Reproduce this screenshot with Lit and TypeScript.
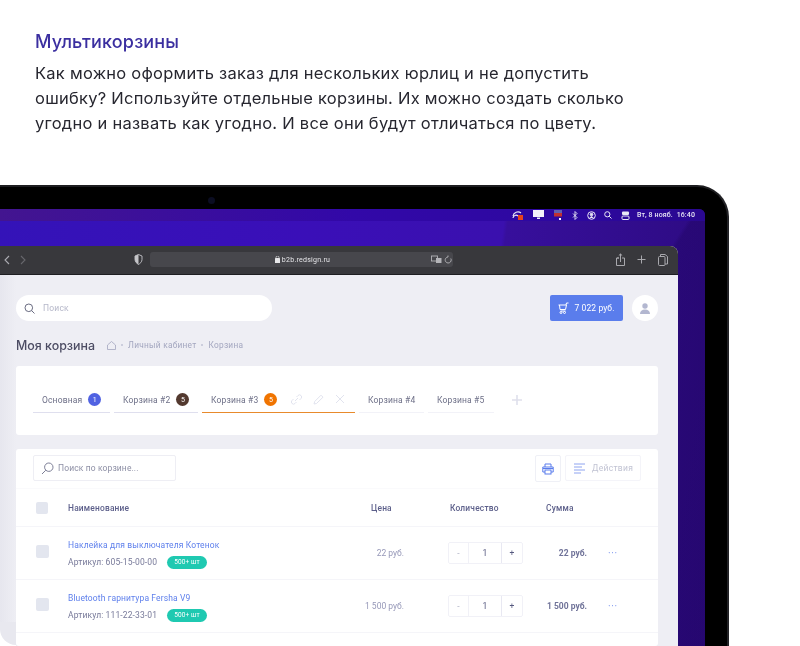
import { LitElement, html, css, svg } from "lit";
import { customElement } from "lit/decorators.js";

const rows = [
  { name: "Наклейка для выключателя Котенок", art: "605-15-00-00", price: "22 руб.", sum: "22 руб." },
  { name: "Bluetooth гарнитура Fersha V9", art: "111-22-33-01", price: "1 500 руб.", sum: "1 500 руб." },
];

const icon = (w: number, h: number, body: unknown, cls = "") =>
  html`<svg class=${cls} width=${w} height=${h} viewBox="0 0 ${w} ${h}" fill="none" stroke="currentColor" stroke-width="1">${body}</svg>`;

@customElement("app-root")
export class AppRoot extends LitElement {
  static styles = css`
    :host { display: block; width: 800px; height: 646px; overflow: hidden; background: #fff; font-family: Inter, "Noto Sans", sans-serif; position: relative; }
    .intro { padding: 31px 35px 0; height: 185px; box-sizing: border-box; filter: blur(0.25px); }
    .intro h1 { margin: 0; font-size: 18px; line-height: 22px; font-weight: 500; color: #3b2fa0; letter-spacing: 0.15px; }
    .intro p { margin: 8px 0 0; font-size: 16.5px; line-height: 25px; color: #26262f; letter-spacing: 0.25px; width: 620px; }
    .device { width: 729px; height: 461px; box-sizing: border-box; background: #000; border-radius: 0 32px 0 0; border-top: 2px solid #1d1d20; border-right: 2px solid #222226; padding: 22px 22px 0 0; position: relative; filter: blur(0.35px); }
    .cam { position: absolute; left: 208px; top: 10px; width: 7px; height: 7px; border-radius: 50%; background: #0b0d22; }
    .screen { height: 100%; border-radius: 0 6px 0 0; padding: 37px 27px 0 0; box-sizing: border-box; position: relative; overflow: hidden;
      background:
        linear-gradient(122deg, transparent 0 71%, rgba(24, 0, 80, 0.28) 71.5% 100%),
        linear-gradient(98deg, #3413b8 0%, #3a0fb8 40%, #3a10ae 66%, #370f9c 66.5%, #2b0a7c 100%); }
    .menubar { position: absolute; left: 0; right: 0; top: 0; height: 12px; box-sizing: border-box; padding-right: 10px; display: flex; justify-content: flex-end; align-items: center; background: linear-gradient(90deg, #431590, #3208a8 50%, #2d08a0 80%, #2a0890); color: #e8e6f5; }
    .menubar .clock { font-family: Roboto, sans-serif; font-size: 7px; font-weight: 500; letter-spacing: 0.12px; margin-left: 7px; white-space: nowrap; }
    .menubar .g10 { margin-left: 10px; }
    .menubar .g9 { margin-left: 9px; }
    .menubar .g8 { margin-left: 8px; }
    .menubar svg { flex: none; }
    .browser { height: 100%; border-radius: 0 8px 0 0; overflow: hidden; display: flex; flex-direction: column; background: #eeeef4; }
    .toolbar { height: 29px; flex: none; box-sizing: border-box; background: #38383c; border-bottom: 1px solid #1e1e22; display: flex; align-items: center; color: #aaaab0; padding-bottom: 1px; }
    .nav { display: flex; gap: 10px; padding-left: 4px; width: 134px; box-sizing: border-box; align-items: center; }
    .shield { margin-right: 7px; flex: none; color: #c4c4c8; }
    .url { width: 303px; height: 15px; background: #47474c; border-radius: 3px; display: flex; align-items: center; justify-content: center; position: relative; color: #e6e6e9; font-family: Roboto, sans-serif; font-size: 7px; letter-spacing: 0.25px; gap: 2px; flex: none; padding-left: 2px; box-sizing: border-box; }
    .url-tools { position: absolute; right: 1px; top: 3px; display: flex; gap: 2px; color: #b4b4b8; }
    .tb-right { margin-left: auto; padding-right: 10px; display: flex; gap: 12px; align-items: center; color: #a8a8ad; }
    .page { flex: 1; padding: 20px 20px 0 16px; box-sizing: border-box; position: relative; background: #eeeef4; }
    .under { position: absolute; left: 0; top: 0; bottom: 0; width: 16px; background: linear-gradient(90deg, #e6e6ee, #eeeef4); }
    .corner { position: absolute; left: 0; bottom: 0; width: 16px; height: 24px; background: #fff; }
    .corner i { display: block; width: 16px; height: 23px; background: #e8e8ef; border-radius: 0 0 0 20px; }
    .head { display: flex; align-items: center; position: relative; }
    .search { width: 256px; height: 26px; background: #fff; border-radius: 13px; display: flex; align-items: center; padding-left: 8px; gap: 8px; box-sizing: border-box; color: #6a6c82; font-family: Roboto, sans-serif; font-size: 8.5px; }
    .search span { color: #b5b7c9; letter-spacing: 0.2px; }
    .cart { margin-left: auto; width: 73px; height: 26px; border-radius: 2px; background: #5a7dec; color: #fff; display: flex; align-items: center; justify-content: center; gap: 5px; font-family: Roboto, sans-serif; font-size: 8.5px; letter-spacing: 0.1px; }
    .avatar { margin-left: 9px; width: 26px; height: 26px; border-radius: 50%; background: #fff; display: flex; align-items: center; justify-content: center; color: #b3b7d0; }
    .crumbs { display: flex; align-items: center; margin-top: 16px; height: 16px; position: relative; }
    .crumbs h2 { margin: 0; font-size: 12.4px; font-weight: 500; color: #4c4c63; width: 91px; }
    .crumbs .c { font-size: 8.3px; color: #a3a6bf; display: flex; align-items: center; gap: 5px; font-family: Roboto, sans-serif; letter-spacing: 0.27px; }
    .crumbs b { width: 2px; height: 2px; background: #c0c3d6; border-radius: 50%; }
    .card { background: #fff; border-radius: 3px; position: relative; }
    .tabs { margin-top: 13px; height: 69px; padding: 21px 17px 0; box-sizing: border-box; display: flex; gap: 4px; align-items: flex-start; font-family: Roboto, sans-serif; }
    .tab { height: 26px; box-sizing: border-box; display: flex; align-items: center; border-bottom: 1px solid #f2f2f8; padding-left: 9px; font-size: 8.5px; color: #6d6f87; letter-spacing: 0.15px; gap: 6px; }
    .tab.seen { border-bottom-color: #dfdfee; }
    .tab.on { border-bottom-color: #e88a2c; }
    .tab i { font-style: normal; width: 13px; height: 13px; border-radius: 50%; color: #fff; font-size: 7px; display: flex; align-items: center; justify-content: center; letter-spacing: 0; }
    .tab-tools { display: flex; gap: 10px; margin-left: 7px; color: #e1e3ee; }
    .plus { margin-left: 14px; margin-top: 8px; color: #dfe0ec; }
    .items { margin-top: 14px; height: 197px; font-family: Roboto, sans-serif; }
    .itool { height: 40px; box-sizing: border-box; padding: 6px 17px 0; display: flex; align-items: flex-start; border-bottom: 1px solid #fafafc; }
    .isearch { width: 143px; height: 26px; box-sizing: border-box; border: 1px solid #eeeef4; border-radius: 2px; display: flex; align-items: center; padding-left: 7px; gap: 4px; font-size: 8.5px; color: #8d8fa5; letter-spacing: 0.12px; }
    .isearch svg { color: #7c7e96; }
    .print { margin-left: auto; width: 26px; height: 27px; box-sizing: border-box; border: 1px solid #eff0f6; border-radius: 2px; display: flex; align-items: center; justify-content: center; color: #5a7dec; }
    .actions { margin-left: 4px; width: 76px; height: 26px; box-sizing: border-box; border: 1px solid #f4f4f9; border-radius: 2px; display: flex; align-items: center; padding-left: 8px; gap: 6px; color: #c1c3d3; font-size: 8.5px; letter-spacing: 0.3px; }
    .actions svg { color: #8ea4f0; }
    .grid { display: grid; grid-template-columns: 52px 303px 77px 75px 64px 1fr; align-items: center; box-sizing: border-box; border-bottom: 1px solid #f5f5f9; }
    .ghead { height: 38px; font-size: 8.4px; font-weight: 500; color: #5c5f8a; letter-spacing: 0.2px; }
    .ghead .qh { padding-left: 2px; }
    .ghead .sh { padding-left: 23px; }
    .grow { height: 53px; color: #8386a8; font-size: 8.5px; }
    .box { margin-left: 20px; width: 12px; height: 12px; border-radius: 2px; background: #e3e6ef; }
    .grow .box { margin-top: -3px; width: 13px; height: 13px; }
    .name { color: #5f80ec; letter-spacing: 0.12px; line-height: 10px; }
    .meta { display: flex; align-items: center; margin-top: 6px; color: #777999; letter-spacing: 0.12px; height: 13px; }
    .pill { position: absolute; left: 99px; width: 40px; height: 13px; border-radius: 7px; background: #1fc9b1; color: #fff; font-size: 6.5px; display: flex; align-items: center; justify-content: center; }
    .cell-name { position: relative; padding-top: 2px; }
    .price { text-align: right; padding-right: 44px; margin-left: -44px; color: #9698b8; }
    .qty { display: flex; width: 75px; height: 22px; box-sizing: border-box; border: 1px solid #f1f1f7; border-radius: 2px; color: #55587f; }
    .qty span { display: flex; align-items: center; justify-content: center; }
    .qty .m { width: 19px; color: #b0b2c6; }
    .qty .v { width: 32px; border-left: 1px solid #f1f1f7; border-right: 1px solid #e8e8f2; }
    .qty .p { flex: 1; }
    .sum { text-align: right; font-weight: 700; color: #6f7298; }
    .dots { color: #7d96ee; padding-left: 21px; letter-spacing: 0.6px; font-size: 10px; }
  `;

  private menuIcons() {
    return html`
      ${icon(11, 10, svg`<path d="M1 6a5 5 0 0 1 8-3M1 8a3 3 0 0 1 5-2" stroke-width="1.2"/><rect x="6" y="5" width="5" height="5" fill="#e8421c" stroke="none"/>`)}
      <svg class="g10" width="11" height="10" viewBox="0 0 11 10"><rect x="0" y="0" width="11" height="7" fill="#f3f1fa"/><rect x="4" y="7.500" width="3" height="1.500" fill="#f3f1fa"/></svg>
      <svg class="g9" width="10" height="10" viewBox="0 0 10 10"><rect x="1" y="0" width="8" height="3.500" fill="#5f5fb0"/><rect x="1" y="3" width="8" height="3.500" fill="#c13030"/><rect x="6" y="8" width="2" height="2" fill="#fff"/></svg>
      ${icon(6, 9, svg`<path d="M1 2.500l4 4L3 8.500V.5l2 2-4 4" stroke-width=".9"/>`, "g9")}
      ${icon(9, 9, svg`<circle cx="4.500" cy="4.500" r="3.800"/><circle cx="4.500" cy="3.500" r="1.300" fill="currentColor"/><path d="M2.500 7l2-1.500 2 1.500" fill="currentColor"/>`, "g9")}
      ${icon(8, 8, svg`<circle cx="3.300" cy="3.300" r="2.600"/><path d="M5.200 5.200L7.500 7.500"/>`, "g8")}
      ${icon(9, 9, svg`<rect x="1" y="0.500" width="7" height="3.500" rx="1" fill="currentColor" stroke="none"/><rect x="1" y="5" width="7" height="3.500" rx="1"/>`, "g9")}
      <span class="clock">Вт, 8 нояб.&nbsp;&nbsp;16:40</span>`;
  }

  private row(r: (typeof rows)[number]) {
    return html`<div class="grid grow">
      <div class="box"></div>
      <div class="cell-name">
        <div class="name">${r.name}</div>
        <div class="meta">Артикул: ${r.art}<span class="pill">500+ шт</span></div>
      </div>
      <div class="price">${r.price}</div>
      <div class="qty"><span class="m">-</span><span class="v">1</span><span class="p">+</span></div>
      <div class="sum">${r.sum}</div>
      <div class="dots">···</div>
    </div>`;
  }

  render() {
    return html`
      <section class="intro">
        <h1>Мультикорзины</h1>
        <p>Как можно оформить заказ для нескольких юрлиц и не допустить ошибку? Используйте отдельные корзины. Их можно создать сколько угодно и назвать как угодно. И все они будут отличаться по цвету.</p>
      </section>
      <div class="device">
        <div class="cam"></div>
        <div class="screen">
          <div class="menubar">${this.menuIcons()}</div>
          <div class="browser">
            <div class="toolbar">
              <div class="nav">
                ${icon(6, 10, svg`<path d="M5 1L1 5l4 4" stroke-width="1.1"/>`)}
                ${icon(6, 10, svg`<path d="M1 1l4 4-4 4" stroke="#66666b" stroke-width="1.1"/>`)}
              </div>
              ${icon(9, 11, svg`<path d="M4.500.5L8 2v3.500c0 2.500-2 4-3.500 5C3 9.500 1 8 1 5.500V2z" stroke-width=".9"/><path d="M4.500.5L1 2v3.500c0 2.500 2 4 3.500 5z" fill="currentColor" stroke="none"/>`, "shield")}
              <div class="url">
                <svg width="5" height="7" viewBox="0 0 5 7"><rect y="2" width="5" height="5" rx=".6" fill="#e6e6e9"/><path d="M1 2.500V1.500a1.500 1.500 0 0 1 3 0v1" fill="none" stroke="#e6e6e9" stroke-width=".7"/></svg>
                b2b.redsign.ru
                <div class="url-tools">
                  ${icon(11, 9, svg`<rect x=".5" y="1" width="6" height="5" stroke-width=".9"/><rect x="5" y="3" width="5.500" height="5" fill="currentColor" stroke="none"/>`)}
                  ${icon(8, 9, svg`<path d="M6.800 3.500A3 3 0 1 1 4 2V.5" stroke-width=".9"/>`)}
                </div>
              </div>
              <div class="tb-right">
                ${icon(9, 13, svg`<path d="M1 5h2M6 5h2.500v7.500H.5V5H3M4.500 9V1M2.800 2.600L4.500 1l1.700 1.600"/>`)}
                ${icon(9, 9, svg`<path d="M4.500.5v8M.5 4.500h8"/>`)}
                ${icon(10, 12, svg`<path d="M2.500 2V.5H7l2.500 2v7.500H7"/><rect x=".5" y="2.500" width="6.500" height="9" rx="1"/>`)}
              </div>
            </div>
            <div class="page">
              <div class="under"></div>
              <div class="corner"><i></i></div>
              <div class="head">
                <div class="search">
                  ${icon(11, 11, svg`<circle cx="4.800" cy="4.800" r="3.800"/><path d="M7.500 7.500l3 3"/>`)}
                  <span>Поиск</span>
                </div>
                <div class="cart">
                  ${icon(11, 12, svg`<path d="M.5 3h8l-1 4.500H2L1.500 3M8 3l.5-2H10.500M2.500 9h5" /><circle cx="3" cy="10.500" r="1" /><circle cx="6.500" cy="10.500" r="1"/>`)}
                  7 022 руб.
                </div>
                <div class="avatar">
                  <svg width="10" height="11" viewBox="0 0 10 11"><circle cx="5" cy="3" r="2.700" fill="currentColor"/><path d="M0 11c0-3 2-4.500 5-4.500S10 8 10 11z" fill="currentColor"/></svg>
                </div>
              </div>
              <div class="crumbs">
                <h2>Моя корзина</h2>
                <div class="c">
                  ${icon(9, 9, svg`<path d="M.5 8.500h8V4L4.500.5.500 4z" stroke-width=".8"/>`)}
                  <b></b><span>Личный кабинет</span><b></b><span>Корзина</span>
                </div>
              </div>
              <div class="card tabs">
                <div class="tab seen" style="width:77px">Основная<i style="background:#5062e2">1</i></div>
                <div class="tab seen" style="width:84px">Корзина #2<i style="background:#53392f">5</i></div>
                <div class="tab on" style="width:153px">Корзина #3<i style="background:#f07400">5</i>
                  <div class="tab-tools">
                    ${icon(13, 11, svg`<path d="M5 7l3-3M3.500 5L2 6.500a2 2 0 0 0 3 3L6.500 8M6.500 3L8 1.500a2 2 0 0 1 3 3L9.500 6"/>`)}
                    ${icon(12, 11, svg`<path d="M1 10l.7-2.500L8 1.200l2 2L3.500 9.500z"/>`)}
                    ${icon(10, 10, svg`<path d="M1 1l8 8M9 1L1 9"/>`)}
                  </div>
                </div>
                <div class="tab" style="width:65px">Корзина #4</div>
                <div class="tab" style="width:66px">Корзина #5</div>
                ${icon(10, 10, svg`<path d="M5 0v10M0 5h10" stroke-width="1.600"/>`, "plus")}
              </div>
              <div class="card items">
                <div class="itool">
                  <div class="isearch">
                    ${icon(13, 13, svg`<circle cx="7.800" cy="5.200" r="4.200"/><path d="M4.800 8.200L1 12"/>`)}
                    Поиск по корзине...
                  </div>
                  <div class="print">
                    ${icon(12, 12, svg`<path d="M3 4V1h6v3M3 9H.8V4h10.400v5H9"/><rect x="3" y="7" width="6" height="4"/><path d="M1 5.500h10"/>`)}
                  </div>
                  <div class="actions">
                    ${icon(12, 11, svg`<path d="M0 1h11M0 4h8M0 7h11M0 10h7"/>`)}
                    Действия
                  </div>
                </div>
                <div class="grid ghead">
                  <div class="box"></div>
                  <div>Наименование</div>
                  <div>Цена</div>
                  <div class="qh">Количество</div>
                  <div class="sh">Сумма</div>
                  <div></div>
                </div>
                ${rows.map((r) => this.row(r))}
              </div>
            </div>
          </div>
        </div>
      </div>
    `;
  }
}
